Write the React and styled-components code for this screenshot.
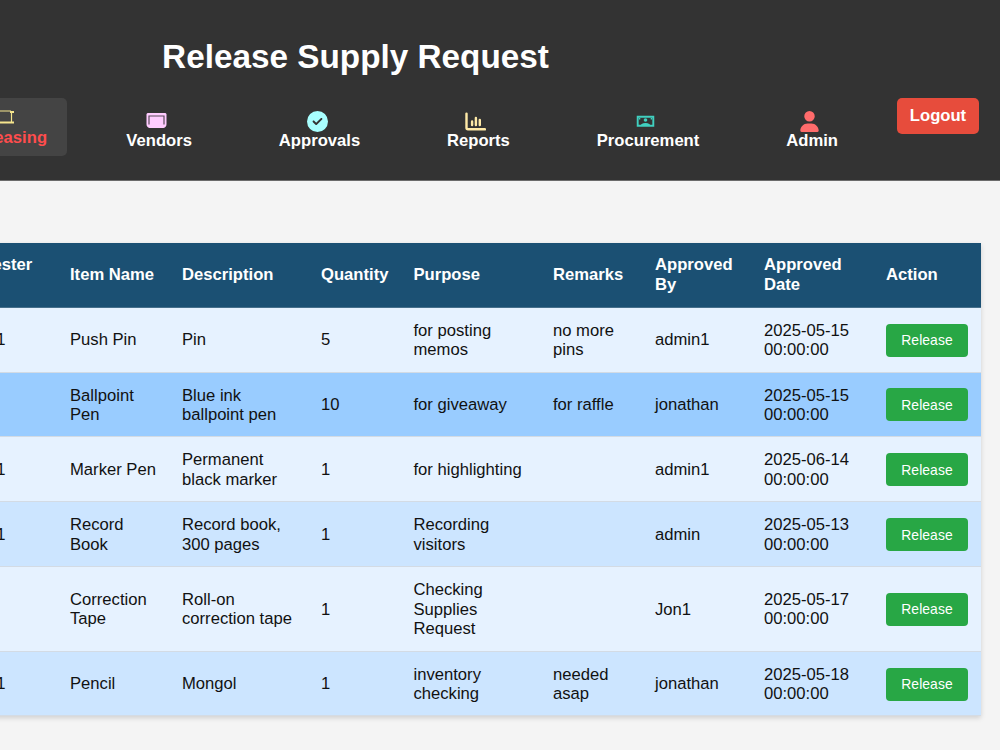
import React, { useState } from 'react';
import styled, { createGlobalStyle } from 'styled-components';
import { FaCircleCheck, FaUser } from 'react-icons/fa6';

const GlobalStyle = createGlobalStyle`
    body {
        margin: 0;
        background-color: #f4f4f4;
        font-family: Arial, "Liberation Sans", sans-serif;
        font-size: 16.64px;
        overflow-x: hidden;
    }
    * {
        box-sizing: border-box;
    }
`;

const Page = styled.div`
    height: 750px;
    overflow: hidden;
`;

const Header = styled.header`
    height: 181px;
    padding-top: 36px;
    background-color: #333;
    border-bottom: 1px solid #6b6b6b;
    color: white;
`;

const Title = styled.h1`
    width: 711px;
    margin: 0;
    font-size: 33.3px;
    line-height: 41px;
    text-align: center;
`;

const Bar = styled.div`
    display: flex;
    align-items: flex-start;
    justify-content: space-between;
    margin: 21px 21px 0 -51.5px;
`;

const Nav = styled.nav`
    display: flex;
    align-items: flex-start;
    gap: 46.9px;
`;

const NavItem = styled.a`
    display: flex;
    flex-direction: column;
    align-items: center;
    height: 58px;
    padding: ${(props) => (props.$active ? '9px' : '13px')} 20px 0;
    margin-right: ${(props) => (props.$active ? '-7.6px' : '0')};
    border-radius: 5px;
    background-color: ${(props) => (props.$active ? '#444' : 'transparent')};
    color: ${(props) => (props.$active ? '#ff4d4d' : 'white')};
    font-weight: bold;
    line-height: ${(props) => (props.$active ? '19px' : '18px')};
    text-decoration: none;
    cursor: pointer;
`;

const IconBox = styled.span`
    display: flex;
    align-items: center;
    justify-content: center;
    height: 21px;
    padding-right: ${(props) => (props.$active ? '0' : '5px')};
    color: ${(props) => props.$color};
`;

const LogoutButton = styled.button`
    width: 82px;
    height: 36px;
    padding: 0;
    border: none;
    border-radius: 5px;
    background-color: #e74c3c;
    color: white;
    font: bold 16.64px Arial, "Liberation Sans", sans-serif;
    cursor: pointer;
`;

const TableWrap = styled.main`
    padding-top: 62px;
    margin-left: -61.5px;
`;

const Table = styled.table`
    width: 1042px;
    table-layout: fixed;
    border-collapse: separate;
    border-spacing: 0;
    background-color: white;
    box-shadow: 0 2px 5px rgba(0, 0, 0, 0.15);
    line-height: 19.45px;
`;

const Col = styled.col`
    width: ${(props) => props.$width}px;
`;

const Th = styled.th`
    height: 64.6px;
    padding: 12px 12.5px;
    background-color: #1b5073;
    border-bottom: 1px solid #46708c;
    color: white;
    text-align: left;
`;

const Td = styled.td`
    height: 64.9px;
    padding: 13px 12.5px 12px;
    border-bottom: 1px solid #d3dbe4;
    color: #111;
`;

const Row = styled.tr`
    background-color: ${(props) => (props.$hover ? '#99ccff' : '#e6f2ff')};
    &:nth-child(even) {
        background-color: ${(props) => (props.$hover ? '#99ccff' : '#cce5ff')};
    }
`;

const ReleaseButton = styled.button`
    display: block;
    width: 82px;
    height: 33px;
    padding: 0;
    border: none;
    border-radius: 4px;
    background-color: #28a745;
    color: white;
    font: 13.87px Arial, "Liberation Sans", sans-serif;
    letter-spacing: 0.1px;
    cursor: pointer;
`;

const ReleasingIcon = () => (
    <svg width="21" height="21" viewBox="0 0 21 21" fill="none" stroke="currentColor">
        <path d="M2 4h12M14.500 5v10" strokeWidth="1.200" />
        <path d="M0 15.500h17" strokeWidth="2" />
        <path d="M13 5h4" strokeWidth="2" />
    </svg>
);

const VendorsIcon = () => (
    <svg width="21" height="21" viewBox="0 0 21 21">
        <path d="M1.500 2h18l1 1v10a4 4 0 0 1-3 4h-14a4 4 0 0 1-3-4V3z" fill="currentColor" />
        <path d="M3 13.500V5h15v8.500" fill="none" stroke="#5b4a5b" strokeWidth="1.200" />
    </svg>
);

const ReportsIcon = () => (
    <svg width="21" height="21" viewBox="0 0 21 21" fill="none" stroke="currentColor" strokeLinecap="round">
        <path d="M1.500 2.600v14.200q0 1.500 1.500 1.500h16.900" strokeWidth="2.400" />
        <path d="M7.100 10.500v3.600M10.900 7v7.100M14.800 9v5.100" strokeWidth="2.400" />
    </svg>
);

const ProcurementIcon = () => (
    <svg width="21" height="21" viewBox="0 0 21 21" fill="currentColor">
        <path d="M2.700 5.800h15.600v9H2.700z" fill="none" stroke="currentColor" strokeWidth="1.900" />
        <circle cx="10.500" cy="9" r="1.800" />
        <path d="M6.200 14.500v-1.300q4.300-2.200 8.600 0v1.300zM4 7h1.300v1.500H4zM15.700 7H17v1.500h-1.300z" />
    </svg>
);

const links = [
    { label: 'Releasing', color: '#f6e58d', icon: <ReleasingIcon /> },
    { label: 'Vendors', color: '#ffccff', icon: <VendorsIcon /> },
    { label: 'Approvals', color: '#a8ffff', icon: <FaCircleCheck size={21} /> },
    { label: 'Reports', color: '#ffeaa7', icon: <ReportsIcon /> },
    { label: 'Procurement', color: '#40d0c0', icon: <ProcurementIcon /> },
    { label: 'Admin', color: '#ff6b6b', icon: <FaUser size={21} /> },
];

const columns = [
    ['Requester Name', 119],
    ['Item Name', 112],
    ['Description', 139],
    ['Quantity', 92.5],
    ['Purpose', 139.5],
    ['Remarks', 102],
    ['Approved By', 109],
    ['Approved Date', 122],
    ['Action', 107],
];

const requests = [
    ['admin1', 'Push Pin', 'Pin', 5, 'for posting memos', 'no more pins', 'admin1', '2025-05-15 00:00:00'],
    ['Jon1', 'Ballpoint Pen', 'Blue ink ballpoint pen', 10, 'for giveaway', 'for raffle', 'jonathan', '2025-05-15 00:00:00'],
    ['admin1', 'Marker Pen', 'Permanent black marker', 1, 'for highlighting', '', 'admin1', '2025-06-14 00:00:00'],
    ['admin1', 'Record Book', 'Record book, 300 pages', 1, 'Recording visitors', '', 'admin', '2025-05-13 00:00:00'],
    ['Jon1', 'Correction Tape', 'Roll-on correction tape', 1, 'Checking Supplies Request', '', 'Jon1', '2025-05-17 00:00:00'],
    ['admin1', 'Pencil', 'Mongol', 1, 'inventory checking', 'needed asap', 'jonathan', '2025-05-18 00:00:00'],
];

export default function App() {
    const [hovered, setHovered] = useState(1);

    return (
        <Page>
            <GlobalStyle />
            <Header>
                <Title>Release Supply Request</Title>
                <Bar>
                    <Nav>
                        {links.map((link) => (
                            <NavItem key={link.label} $active={link.label === 'Releasing'}>
                                <IconBox $color={link.color} $active={link.label === 'Releasing'}>
                                    {link.icon}
                                </IconBox>
                                {link.label}
                            </NavItem>
                        ))}
                    </Nav>
                    <LogoutButton>Logout</LogoutButton>
                </Bar>
            </Header>
            <TableWrap>
                <Table>
                    <colgroup>
                        {columns.map(([name, width]) => (
                            <Col key={name} $width={width} />
                        ))}
                    </colgroup>
                    <thead>
                        <tr>
                            {columns.map(([name]) => (
                                <Th key={name}>{name}</Th>
                            ))}
                        </tr>
                    </thead>
                    <tbody>
                        {requests.map((request, i) => (
                            <Row key={i} $hover={i === hovered} onMouseEnter={() => setHovered(i)}>
                                {request.map((value, j) => (
                                    <Td key={j}>{value}</Td>
                                ))}
                                <Td>
                                    <ReleaseButton>Release</ReleaseButton>
                                </Td>
                            </Row>
                        ))}
                    </tbody>
                </Table>
            </TableWrap>
        </Page>
    );
}
